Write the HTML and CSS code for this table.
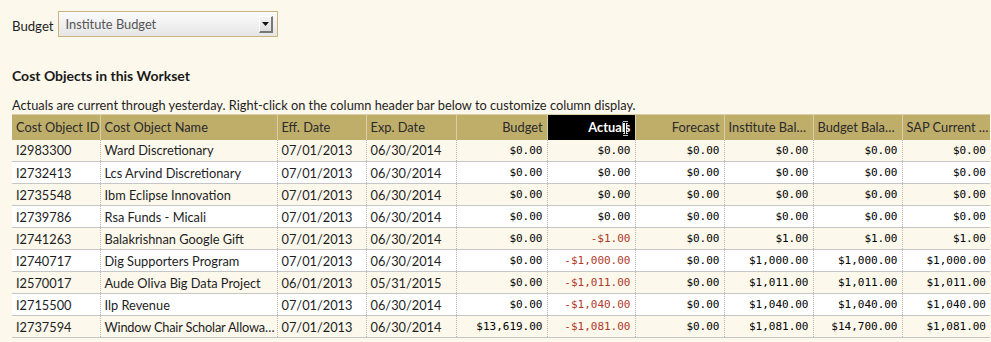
FILE: index.html
```html
<!DOCTYPE html>
<html>
<head>
<meta charset="utf-8">
<link rel="stylesheet" href="styles.css">
</head>
<body>
<div class="page">
  <div class="budget-row">
    <span class="budget-label">Budget</span>
    <div class="select">
      <span class="select-text">Institute Budget</span>
      <span class="select-btn"><svg width="7" height="4" viewBox="0 0 7 4"><path d="M0 0H7L3.5 4Z" fill="#111"/></svg></span>
    </div>
  </div>
  <h2 class="section-title">Cost Objects in this Workset</h2>
  <p class="note">Actuals are current through yesterday. Right-click on the column header bar below to customize column display.</p>
  <table class="grid">
    <colgroup>
      <col class="c-id"><col class="c-name"><col class="c-date"><col class="c-date2"><col class="c-num1">
      <col class="c-num2"><col class="c-num3"><col class="c-num3"><col class="c-num3"><col class="c-num2">
    </colgroup>
    <thead>
      <tr>
        <th>Cost Object ID</th>
        <th>Cost Object Name</th>
        <th>Eff. Date</th>
        <th>Exp. Date</th>
        <th class="r">Budget</th>
        <th class="r active">Actuals<svg class="cursor" width="7" height="15" viewBox="0 0 7 15"><path d="M1 1.5H6M3.5 1.5V13.5M1 13.5H6" stroke="#fff" stroke-width="2.6" fill="none"/><path d="M1 1.5H6M3.5 1.5V13.5M1 13.5H6" stroke="#000" stroke-width="1" fill="none"/></svg></th>
        <th class="r">Forecast</th>
        <th>Institute Bal…</th>
        <th>Budget Bala…</th>
        <th>SAP Current …</th>
      </tr>
    </thead>
    <tbody>
      <tr><td>I2983300</td><td>Ward Discretionary</td><td>07/01/2013</td><td>06/30/2014</td><td class="n">$0.00</td><td class="n">$0.00</td><td class="n">$0.00</td><td class="n">$0.00</td><td class="n">$0.00</td><td class="n">$0.00</td></tr>
      <tr><td>I2732413</td><td>Lcs Arvind Discretionary</td><td>07/01/2013</td><td>06/30/2014</td><td class="n">$0.00</td><td class="n">$0.00</td><td class="n">$0.00</td><td class="n">$0.00</td><td class="n">$0.00</td><td class="n">$0.00</td></tr>
      <tr><td>I2735548</td><td>Ibm Eclipse Innovation</td><td>07/01/2013</td><td>06/30/2014</td><td class="n">$0.00</td><td class="n">$0.00</td><td class="n">$0.00</td><td class="n">$0.00</td><td class="n">$0.00</td><td class="n">$0.00</td></tr>
      <tr><td>I2739786</td><td>Rsa Funds - Micali</td><td>07/01/2013</td><td>06/30/2014</td><td class="n">$0.00</td><td class="n">$0.00</td><td class="n">$0.00</td><td class="n">$0.00</td><td class="n">$0.00</td><td class="n">$0.00</td></tr>
      <tr><td>I2741263</td><td>Balakrishnan Google Gift</td><td>07/01/2013</td><td>06/30/2014</td><td class="n">$0.00</td><td class="n neg">-$1.00</td><td class="n">$0.00</td><td class="n">$1.00</td><td class="n">$1.00</td><td class="n">$1.00</td></tr>
      <tr><td>I2740717</td><td>Dig Supporters Program</td><td>07/01/2013</td><td>06/30/2014</td><td class="n">$0.00</td><td class="n neg">-$1,000.00</td><td class="n">$0.00</td><td class="n">$1,000.00</td><td class="n">$1,000.00</td><td class="n">$1,000.00</td></tr>
      <tr><td>I2570017</td><td>Aude Oliva Big Data Project</td><td>06/01/2013</td><td>05/31/2015</td><td class="n">$0.00</td><td class="n neg">-$1,011.00</td><td class="n">$0.00</td><td class="n">$1,011.00</td><td class="n">$1,011.00</td><td class="n">$1,011.00</td></tr>
      <tr><td>I2715500</td><td>Ilp Revenue</td><td>07/01/2013</td><td>06/30/2014</td><td class="n">$0.00</td><td class="n neg">-$1,040.00</td><td class="n">$0.00</td><td class="n">$1,040.00</td><td class="n">$1,040.00</td><td class="n">$1,040.00</td></tr>
      <tr><td>I2737594</td><td class="tight">Window Chair Scholar Allowa…</td><td>07/01/2013</td><td>06/30/2014</td><td class="n">$13,619.00</td><td class="n neg">-$1,081.00</td><td class="n">$0.00</td><td class="n">$1,081.00</td><td class="n">$14,700.00</td><td class="n">$1,081.00</td></tr>
    </tbody>
  </table>
</div>
</body>
</html>
```

FILE: styles.css
```css
html, body {
  margin: 0;
  padding: 0;
  background: #fcf8ec;
}
body {
  font-family: "Lato", "Open Sans", sans-serif;
  font-size: 12.8px;
  color: #1e1e1e;
}
.page {
  padding: 11px 0 0 12px;
}
.budget-row {
  display: flex;
  align-items: center;
  gap: 4px;
  height: 26px;
}
.budget-label {
  font-size: 13.2px;
  padding-top: 3px;
}
.select {
  box-sizing: border-box;
  width: 220px;
  height: 26px;
  border: 1px solid #c9b478;
  background: linear-gradient(#fbfbfb, #e6e6e6);
  display: flex;
  align-items: center;
  justify-content: space-between;
  padding: 0 4px 0 7px;
}
.select-text {
  color: #555;
  font-size: 12.8px;
}
.select-btn {
  box-sizing: border-box;
  width: 14px;
  height: 17px;
  background: linear-gradient(#f4f4f4, #dcdcdc);
  border-right: 2px solid #777;
  border-bottom: 2px solid #777;
  border-top: 1px solid #fff;
  border-left: 1px solid #fff;
  display: flex;
  align-items: center;
  justify-content: center;
}
.section-title {
  margin: 30px 0 0 0;
  font-size: 14px;
  font-weight: bold;
  line-height: 18px;
  color: #1a1a1a;
}
.note {
  margin: 11px 0 0 0;
  font-size: 12.8px;
  line-height: 18px;
}
.grid {
  border-collapse: collapse;
  table-layout: fixed;
  width: 978px;
  margin-top: 0;
}
.c-id { width: 88px; }
.c-name { width: 177px; }
.c-date { width: 89px; }
.c-date2 { width: 90px; }
.c-num1 { width: 91px; }
.c-num2 { width: 88px; }
.c-num3 { width: 89px; }
.grid th {
  background: #bfad6a;
  color: #2a2a2a;
  font-weight: normal;
  text-align: left;
  height: 25px;
  padding: 0 4px;
  box-sizing: border-box;
  white-space: nowrap;
  overflow: hidden;
  border-left: 1px solid #d8cfa6;
  border-top: 1px solid #d8cfa6;
}
.grid th:first-child { border-left: none; }
.grid th.r { text-align: right; }
.grid th.active {
  background: #000;
  color: #fff;
  font-weight: bold;
  position: relative;
}
.cursor {
  position: absolute;
  left: 74px;
  top: 6px;
}
.grid td {
  height: 22px;
  box-sizing: border-box;
  padding: 0 4px;
  white-space: nowrap;
  overflow: hidden;
  border-bottom: 1px solid #c6c6c6;
  border-left: 1px dotted #b5b5b5;
}
.grid td.tight {
  padding-right: 0;
  letter-spacing: -0.2px;
}
.grid td:first-child { border-left: none; }
.grid tbody tr:nth-child(odd) td { background: #fcf8ec; }
.grid tbody tr:nth-child(even) td { background: #ffffff; }
.grid td.n {
  text-align: right;
  font-family: "DejaVu Sans Mono", monospace;
  font-size: 11px;
  color: #000;
}
.grid td.neg { color: #b03a2a; }
```
